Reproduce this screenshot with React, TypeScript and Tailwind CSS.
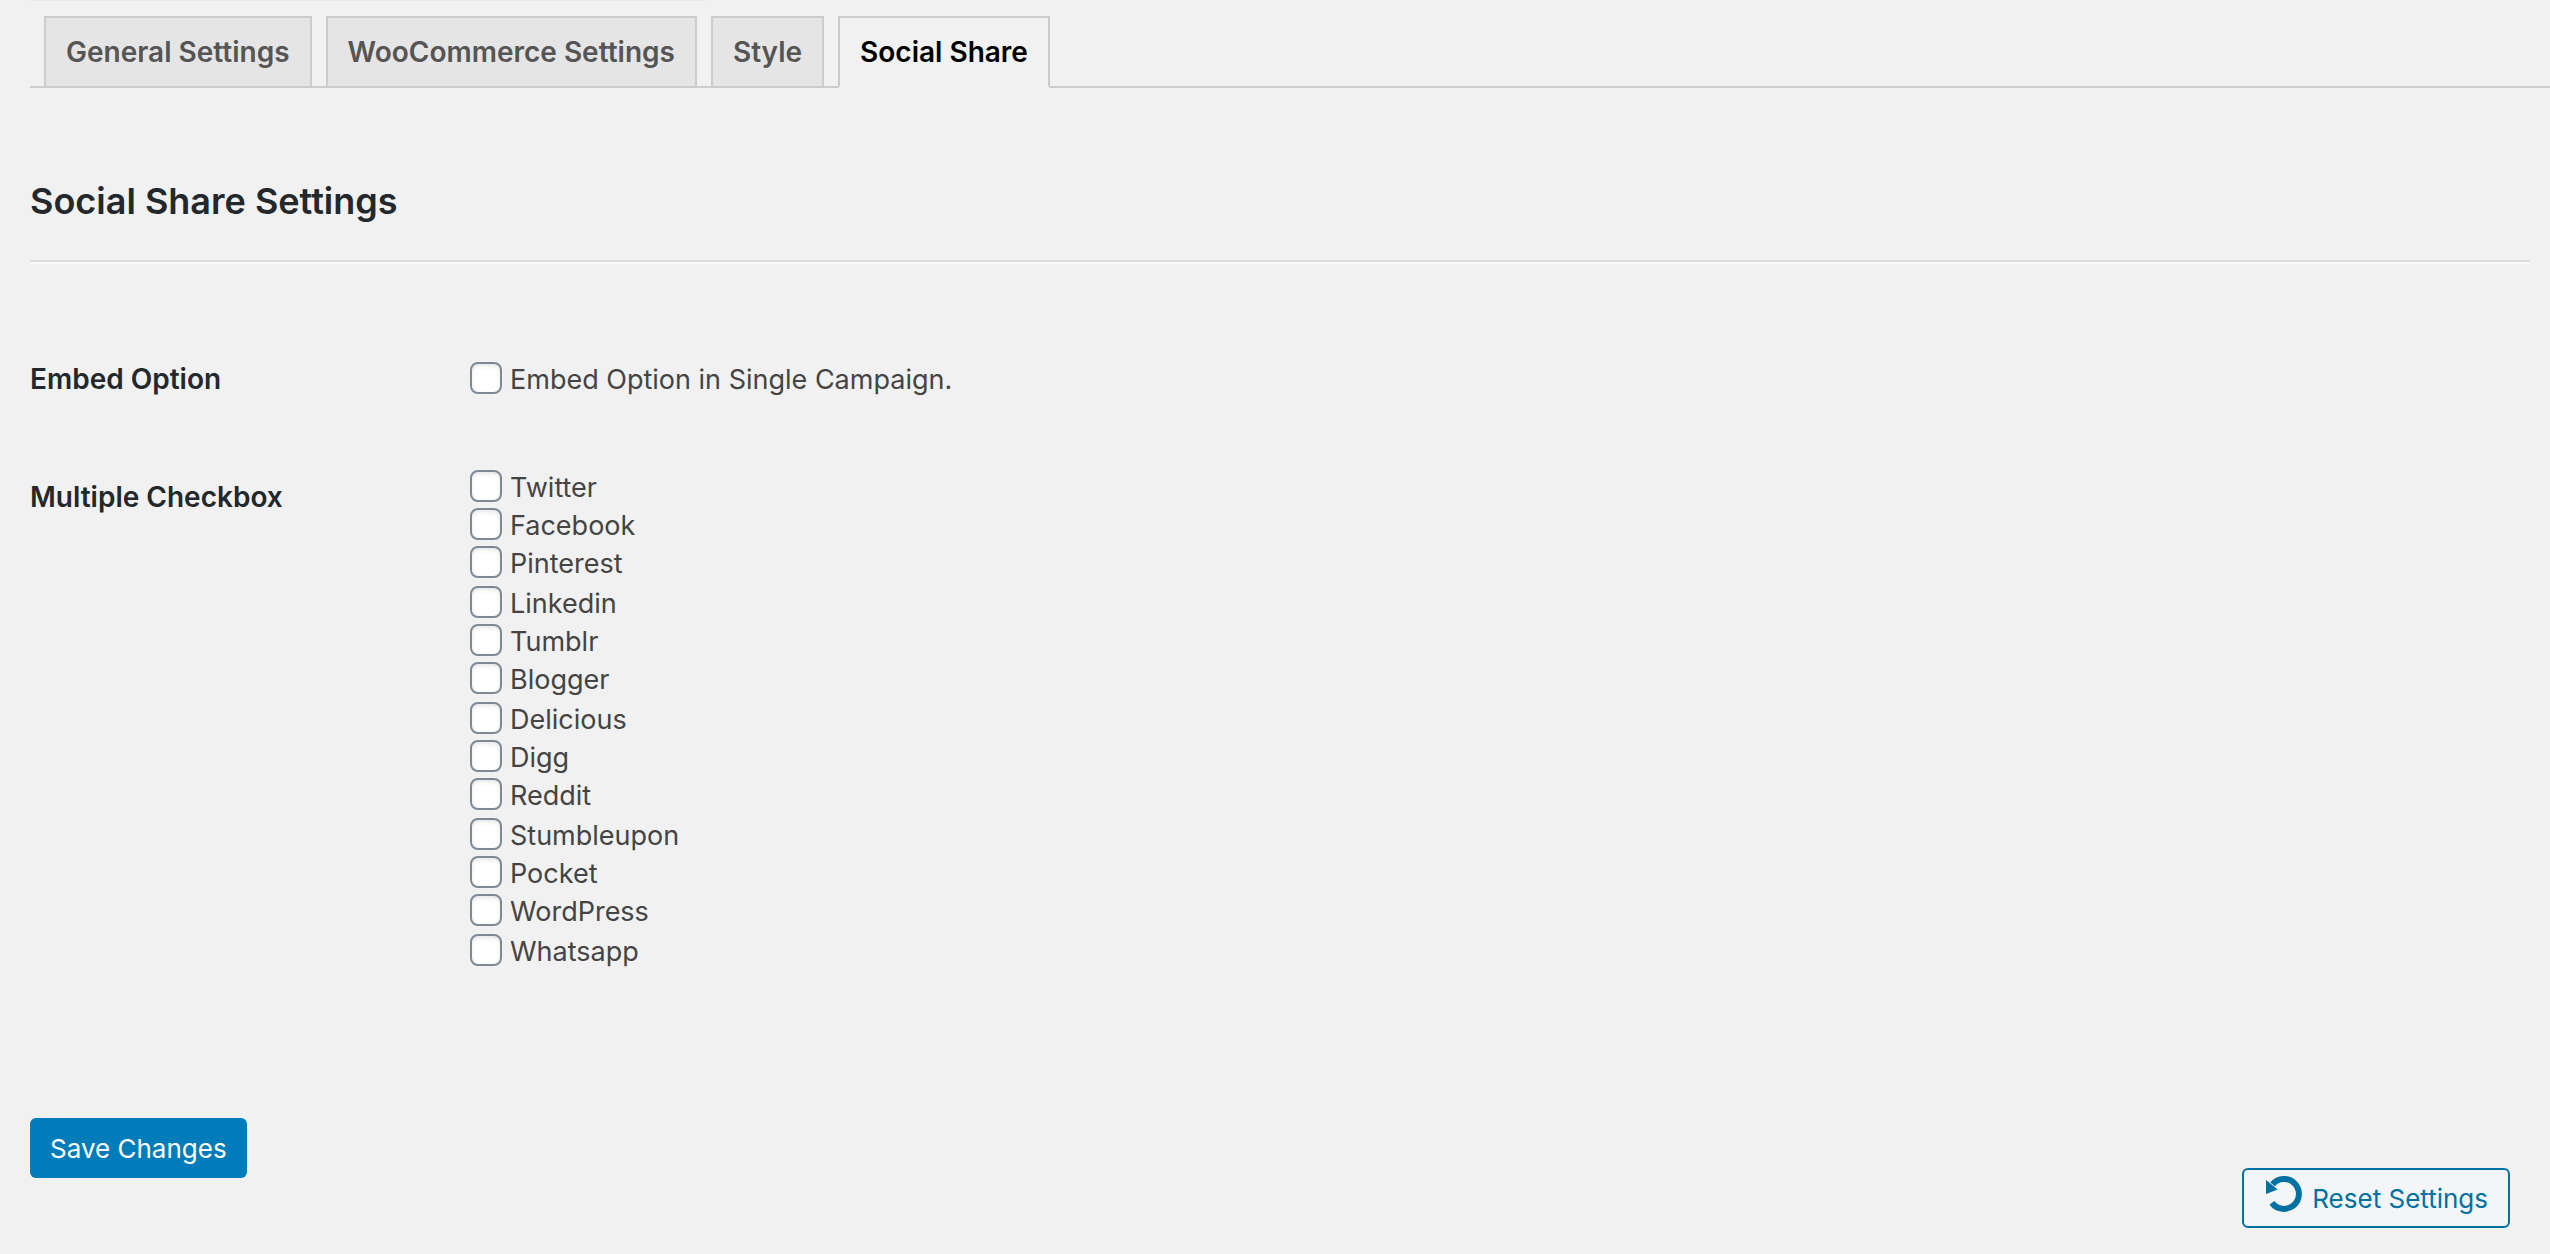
import React from "react";

const tabs = [
  { label: "General Settings", active: false },
  { label: "WooCommerce Settings", active: false },
  { label: "Style", active: false },
  { label: "Social Share", active: true },
];

const networks = [
  "Twitter",
  "Facebook",
  "Pinterest",
  "Linkedin",
  "Tumblr",
  "Blogger",
  "Delicious",
  "Digg",
  "Reddit",
  "Stumbleupon",
  "Pocket",
  "WordPress",
  "Whatsapp",
];

function Tab({ label, active }: { label: string; active: boolean }) {
  const state = active
    ? "-mb-0.5 border-b-2 border-b-[#f1f1f1] bg-[#f1f1f1] text-black"
    : "bg-[#e5e5e5] text-[#555]";
  return (
    <a
      href="#"
      aria-current={active ? "page" : undefined}
      className={`border-x-2 border-t-2 border-[#ccc] px-5 py-2.5 text-[28px] leading-[48px] font-semibold whitespace-nowrap ${state}`}
    >
      {label}
    </a>
  );
}

function Check({ label }: { label: string }) {
  return (
    <label className="flex h-[38px] items-start gap-2 text-[27px] leading-[36px] text-[#444]">
      <input
        type="checkbox"
        className="size-8 shrink-0 appearance-none rounded-lg border-2 border-[#7e8993] bg-white shadow-[inset_0_2px_4px_rgba(0,0,0,0.1)] checked:bg-[#007cba]"
      />
      {label}
    </label>
  );
}

function ResetIcon() {
  return (
    <svg viewBox="0 0 40 40" className="size-10 shrink-0" fill="none" aria-hidden="true">
      <path d="M7.9 28.9A15 15 0 1 0 8.5 10.2" stroke="currentColor" strokeWidth="6" />
      <path d="M2 6V20L13.7 15.4Z" fill="currentColor" />
    </svg>
  );
}

export default function App() {
  return (
    <div className="min-h-screen bg-[#f1f1f1] pl-[30px] font-['Inter',sans-serif] text-[#444]">
      <div className="h-px w-[676px] bg-[#e8e8e8]" />
      <nav
        aria-label="Settings sections"
        className="mt-[15px] flex gap-3.5 border-b-2 border-[#ccc] pl-3.5"
      >
        {tabs.map((t) => (
          <Tab key={t.label} label={t.label} active={t.active} />
        ))}
      </nav>

      <main className="pr-5">
        <h2 className="mt-[78px] text-[36px] leading-[70px] font-semibold text-[#23282d]">
          Social Share Settings
        </h2>
        <hr className="mt-6 h-1 border-t-2 border-b-2 border-t-[#ddd] border-b-[#fafafa]" />

        <form onSubmit={(e) => e.preventDefault()}>
          <div className="mt-[98px] grid grid-cols-[440px_1fr]">
            <h3 id="embed" className="text-[28px] leading-[34px] font-semibold text-[#23282d]">
              Embed Option
            </h3>
            <div role="group" aria-labelledby="embed">
              <Check label="Embed Option in Single Campaign." />
            </div>
          </div>

          <div className="mt-[70px] grid grid-cols-[440px_1fr]">
            <h3
              id="multiple"
              className="pt-2.5 text-[28px] leading-[34px] font-semibold text-[#23282d]"
            >
              Multiple Checkbox
            </h3>
            <ul aria-labelledby="multiple">
              {networks.map((n) => (
                <li key={n} className="nth-[3n]:mb-0.5">
                  <Check label={n} />
                </li>
              ))}
            </ul>
          </div>

          <div className="mt-[146px] flex items-start justify-between pr-5">
            <button
              type="submit"
              className="h-[60px] rounded-md bg-[#007cba] px-5 pt-0.5 text-[26px] leading-[58px] text-white"
            >
              Save Changes
            </button>
            <button
              type="button"
              className="mt-[50px] flex h-[60px] gap-2 rounded-md border-2 border-[#0071a1] bg-[#f3f5f6] px-5 text-[26px] leading-[58px] text-[#0071a1]"
            >
              <span className="pt-1">
                <ResetIcon />
              </span>
              Reset Settings
            </button>
          </div>
        </form>
      </main>
    </div>
  );
}
